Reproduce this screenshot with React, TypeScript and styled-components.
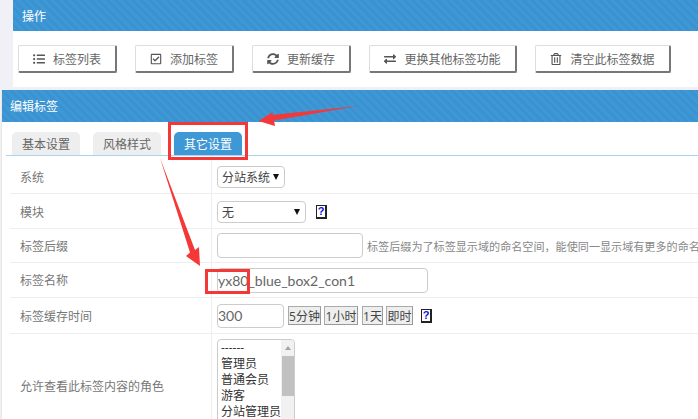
import React from "react";
import styled, { createGlobalStyle } from "styled-components";
import {
  FaListUl,
  FaRegCheckSquare,
  FaSyncAlt,
  FaExchangeAlt,
  FaRegTrashAlt,
} from "react-icons/fa";

const GlobalStyle = createGlobalStyle`
  html, body {
    margin: 0;
    padding: 0;
    height: 419px;
    overflow: hidden;
    background: #f0f0f6;
    font-family: "Open Sans", "Noto Sans CJK SC", sans-serif;
  }
  * { box-sizing: border-box; }
`;

const Page = styled.div`
  position: relative;
  width: 698px;
  height: 419px;
  overflow: hidden;
`;

const TopPanel = styled.section`
  margin-left: 13px;
  height: 87px;
  background: #fff;
`;

const Header = styled.div<{ $height: number; $indent: number }>`
  height: ${(p) => p.$height}px;
  padding-left: ${(p) => p.$indent}px;
  display: flex;
  align-items: center;
  color: #fff;
  font-size: 12px;
  background: repeating-linear-gradient(
    45deg,
    #3f98d6 0 3px,
    #3b92d1 3px 6px
  );
`;

const Toolbar = styled.div`
  display: flex;
  gap: 18px;
  padding: 14px 0 0 5px;
`;

const ToolButton = styled.div<{ $width: number }>`
  width: ${(p) => p.$width}px;
  height: 28px;
  display: flex;
  align-items: center;
  justify-content: center;
  gap: 8px;
  background: #fff;
  border: 1px solid #ddd;
  border-right: 2px solid #777;
  border-bottom: 2px solid #777;
  border-radius: 2px;
  color: #666;
  font-size: 12px;
  svg {
    font-size: 12px;
    color: #555;
  }
`;

const EditPanel = styled.section`
  margin: 3px 0 0 1px;
  height: 349px;
  background: #fff;
  border-left: 1px solid #e8e8e8;
`;

const Tabs = styled.div`
  display: flex;
  gap: 13px;
  height: 34px;
  margin-left: 4px;
  padding: 10px 0 0 6px;
  border-bottom: 1px solid #a9d4f3;
`;

const Tab = styled.div<{ $active?: boolean }>`
  width: 68px;
  height: 23px;
  display: flex;
  align-items: center;
  justify-content: center;
  border-radius: 5px 5px 0 0;
  font-size: 12px;
  background: ${(p) => (p.$active ? "#3f98d6" : "#eee")};
  color: ${(p) => (p.$active ? "#fff" : "#666")};
`;

const Form = styled.div`
  margin-left: 8px;
`;

const Row = styled.div<{ $height: number; $top?: number }>`
  display: grid;
  grid-template-columns: 202px 1fr;
  height: ${(p) => p.$height}px;
  border-bottom: 1px solid #eee;
  > * {
    padding-top: ${(p) => p.$top ?? 0}px;
  }
`;

const Label = styled.div`
  display: flex;
  align-items: center;
  padding-left: 10px;
  font-size: 12px;
  color: #777;
  border-right: 1px solid #eee;
`;

const Field = styled.div`
  display: flex;
  align-items: center;
  gap: 4px;
  padding-left: 5px;
  min-width: 0;
  white-space: nowrap;
`;

const FakeSelect = styled.div<{ $width: number }>`
  width: ${(p) => p.$width}px;
  height: 22px;
  display: flex;
  align-items: center;
  justify-content: space-between;
  padding: 0 5px 0 4px;
  border: 1px solid #ccc;
  border-radius: 4px;
  background: #fff;
  font-size: 12px;
  color: #444;
`;

const Caret = styled.span`
  width: 0;
  height: 0;
  border-left: 3.5px solid transparent;
  border-right: 3.5px solid transparent;
  border-top: 6px solid #111;
`;

const TextInput = styled.input<{ $width: number; $height: number }>`
  width: ${(p) => p.$width}px;
  height: ${(p) => p.$height}px;
  padding: 0;
  border: 1px solid #ccc;
  border-radius: 4px;
  outline: none;
  background: #fff;
  font-family: Lato, "Noto Sans CJK SC", sans-serif;
  font-size: 14px;
  color: #666;
`;

const Hint = styled.span`
  font-size: 11.1px;
  color: #888;
`;

const HelpIcon = styled.span<{ $left: number }>`
  width: 11px;
  height: 14px;
  margin-left: ${(p) => p.$left}px;
  display: flex;
  align-items: center;
  justify-content: center;
  border: 1px solid #222;
  border-right-width: 2px;
  border-bottom-width: 2px;
  background: #fff;
  color: #1010e0;
  font: bold 11px "Liberation Sans", sans-serif;
`;

const QuickButton = styled.div<{ $width: number; $left?: number }>`
  width: ${(p) => p.$width}px;
  height: 19px;
  margin-left: ${(p) => p.$left ?? 0}px;
  display: flex;
  align-items: center;
  justify-content: center;
  background: #eee;
  border: 1px solid #aaa;
  border-right-color: #999;
  border-bottom-color: #999;
  font-size: 12px;
  color: #444;
`;

const ListBox = styled.div`
  align-self: flex-start;
  margin-top: 5px;
  width: 78px;
  height: 90px;
  display: flex;
  justify-content: space-between;
  border: 1px solid #ccc;
  border-radius: 4px 4px 0 0;
  overflow: hidden;
  background: #fff;
`;

const Options = styled.div`
  padding: 0 0 0 3px;
  font-size: 12px;
  line-height: 16px;
  color: #333;
`;

const ScrollTrack = styled.div`
  width: 16px;
  background: #f1f1f1;
  display: flex;
  flex-direction: column;
  align-items: center;
  padding-top: 6px;
`;

const ScrollArrow = styled.span`
  width: 0;
  height: 0;
  border-left: 3px solid transparent;
  border-right: 3px solid transparent;
  border-bottom: 4px solid #a3a3a3;
`;

const ScrollThumb = styled.div`
  width: 12px;
  height: 40px;
  margin-top: 6px;
  background: #c1c1c1;
`;

const RedBox = styled.div<{ $x: number; $y: number; $w: number; $h: number }>`
  position: absolute;
  left: ${(p) => p.$x}px;
  top: ${(p) => p.$y}px;
  width: ${(p) => p.$w}px;
  height: ${(p) => p.$h}px;
  border: 3px solid #f43838;
`;

const ArrowLayer = styled.svg`
  position: absolute;
  left: 0;
  top: 0;
`;

const tools = [
  { label: "标签列表", width: 99, icon: <FaListUl /> },
  { label: "添加标签", width: 99, icon: <FaRegCheckSquare /> },
  { label: "更新缓存", width: 99, icon: <FaSyncAlt /> },
  { label: "更换其他标签功能", width: 148, icon: <FaExchangeAlt /> },
  { label: "清空此标签数据", width: 136, icon: <FaRegTrashAlt /> },
];

export default function App() {
  return (
    <Page>
      <GlobalStyle />
      <TopPanel>
        <Header $height={31} $indent={9}>操作</Header>
        <Toolbar>
          {tools.map((tool) => (
            <ToolButton key={tool.label} $width={tool.width}>
              {tool.icon}
              {tool.label}
            </ToolButton>
          ))}
        </Toolbar>
      </TopPanel>
      <EditPanel>
        <Header $height={32} $indent={8}>编辑标签</Header>
        <Tabs>
          <Tab>基本设置</Tab>
          <Tab>风格样式</Tab>
          <Tab $active>其它设置</Tab>
        </Tabs>
        <Form>
          <Row $height={38} $top={4}>
            <Label>系统</Label>
            <Field>
              <FakeSelect $width={68}>分站系统<Caret /></FakeSelect>
            </Field>
          </Row>
          <Row $height={35} $top={1}>
            <Label>模块</Label>
            <Field>
              <FakeSelect $width={89}>无<Caret /></FakeSelect>
              <HelpIcon $left={6}>?</HelpIcon>
            </Field>
          </Row>
          <Row $height={34}>
            <Label>标签后缀</Label>
            <Field>
              <TextInput $width={146} $height={25} readOnly />
              <Hint>标签后缀为了标签显示域的命名空间，能使同一显示域有更多的命名</Hint>
            </Field>
          </Row>
          <Row $height={35}>
            <Label>标签名称</Label>
            <Field>
              <TextInput $width={211} $height={25} readOnly value="yx80_blue_box2_con1" />
            </Field>
          </Row>
          <Row $height={36}>
            <Label>标签缓存时间</Label>
            <Field>
              <TextInput $width={67} $height={24} readOnly value="300" />
              <QuickButton $width={33}>5分钟</QuickButton>
              <QuickButton $width={34} $left={-1}>1小时</QuickButton>
              <QuickButton $width={21}>1天</QuickButton>
              <QuickButton $width={27} $left={-1}>即时</QuickButton>
              <HelpIcon $left={4}>?</HelpIcon>
            </Field>
          </Row>
          <Row $height={104}>
            <Label>允许查看此标签内容的角色</Label>
            <Field>
              <ListBox>
                <Options>
                  <div>------</div>
                  <div>管理员</div>
                  <div>普通会员</div>
                  <div>游客</div>
                  <div>分站管理员</div>
                </Options>
                <ScrollTrack>
                  <ScrollArrow />
                  <ScrollThumb />
                </ScrollTrack>
              </ListBox>
            </Field>
          </Row>
        </Form>
      </EditPanel>
      <RedBox $x={168} $y={122} $w={80} $h={38} />
      <RedBox $x={205} $y={269} $w={45} $h={25} />
      <ArrowLayer width="698" height="419" viewBox="0 0 698 419">
        <path d="M358 106 L272 115 L273 112 L258.5 121 L275 126 L274 120.5 Z" fill="#f43838" />
        <path d="M160 158 L190 252.5 L186 256 L200 266 L199 247 L195 250 Z" fill="#f43838" />
      </ArrowLayer>
    </Page>
  );
}
